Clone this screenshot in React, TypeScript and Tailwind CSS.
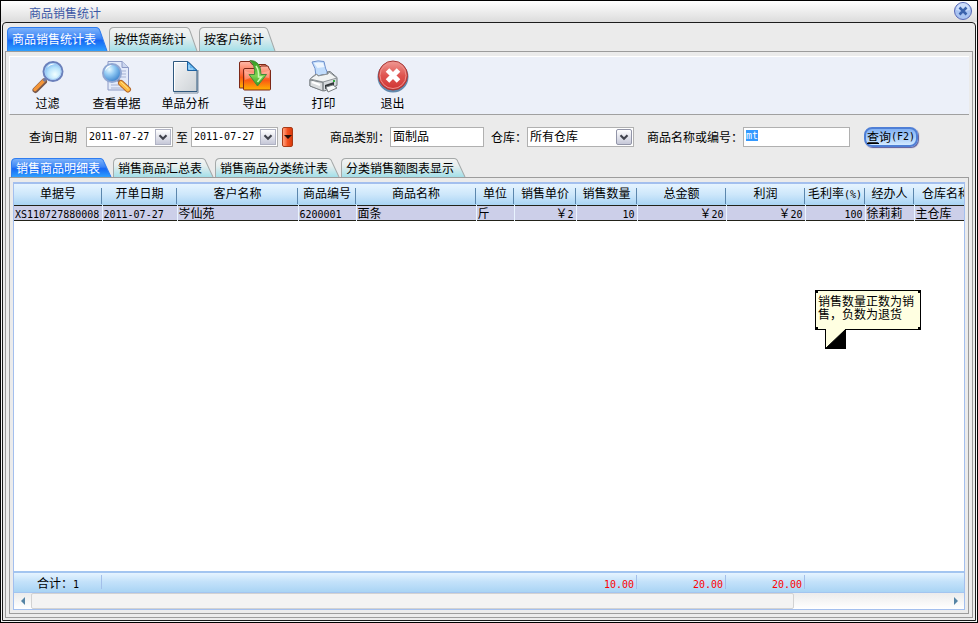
import { useEffect, useRef, type ReactNode } from "react";

const reportTabs = ["商品销售统计表", "按供货商统计", "按客户统计"];
const detailTabs = ["销售商品明细表", "销售商品汇总表", "销售商品分类统计表", "分类销售额图表显示"];

const columns = [
  { title: "单据号", width: "w-[88px]" },
  { title: "开单日期", width: "w-[75px]" },
  { title: "客户名称", width: "w-[121px]" },
  { title: "商品编号", width: "w-[58px]" },
  { title: "商品名称", width: "w-[120px]" },
  { title: "单位", width: "w-[38px]" },
  { title: "销售单价", width: "w-[62px]" },
  { title: "销售数量", width: "w-[61px]" },
  { title: "总金额", width: "w-[89px]" },
  { title: "利润", width: "w-[79px]" },
  { title: "毛利率", unit: "(%)", width: "w-[60px]" },
  { title: "经办人", width: "w-[49px]" },
  { title: "仓库名称", width: "w-[64px]" },
];

function Num({ children }: { children: ReactNode }) {
  return <span className="font-['DejaVu_Sans_Mono',monospace] text-[10px] leading-none">{children}</span>;
}

function Tab({ label, active, tall }: { label: string; active: boolean; tall?: boolean }) {
  const w = label.length * 12 + 17;
  const h = tall ? 24 : 19;
  const shape = `M.5 ${h}V5Q.5 .5 5 .5H${w - 12}Q${w - 9} .5 ${w - 8} 4L${w - 1} ${h}`;
  const fill = active ? "url(#tab-on)" : "url(#tab-off)";
  return (
    <button
      role="tab"
      aria-selected={active}
      className={`relative pl-[5px] pr-3 ${tall ? "h-6" : "h-[19px]"} ${active ? "text-white" : "text-black"}`}
    >
      <svg className="absolute inset-0 h-full w-full" viewBox={`0 0 ${w} ${h}`} preserveAspectRatio="none">
        <path d={shape} fill={fill} stroke={active ? "#2f7df0" : "#a5a9a9"} />
      </svg>
      <span className="relative block whitespace-nowrap leading-4">{label}</span>
    </button>
  );
}

// gradients shared by tabs and toolbar icons
function Gradients() {
  return (
    <svg className="absolute h-0 w-0" aria-hidden="true">
      <defs>
        <linearGradient id="tab-on" x1="0" y1="0" x2="0" y2="1">
          <stop offset="0" stopColor="#7eb4fb" />
          <stop offset=".45" stopColor="#3d85f5" />
          <stop offset=".55" stopColor="#1667f4" />
          <stop offset="1" stopColor="#2fa0ff" />
        </linearGradient>
        <linearGradient id="tab-off" x1="0" y1="0" x2="0" y2="1">
          <stop offset="0" stopColor="#f4f4f3" />
          <stop offset=".4" stopColor="#e6eeee" />
          <stop offset="1" stopColor="#a3dfe8" />
        </linearGradient>
        <radialGradient id="lens" cx=".6" cy=".65" r=".7">
          <stop offset="0" stopColor="#f2ffff" />
          <stop offset=".5" stopColor="#b9e4fc" />
          <stop offset="1" stopColor="#6eaeed" />
        </radialGradient>
        <radialGradient id="lens-dark" cx=".35" cy=".3" r=".8">
          <stop offset="0" stopColor="#e9faff" />
          <stop offset=".4" stopColor="#8fc8f3" />
          <stop offset="1" stopColor="#2b74c4" />
        </radialGradient>
        <linearGradient id="paper" x1="0" y1="0" x2="1" y2="1">
          <stop offset="0" stopColor="#f4f5f7" />
          <stop offset="1" stopColor="#cdd2d6" />
        </linearGradient>
        <linearGradient id="folder" x1="0" y1="0" x2="0" y2="1">
          <stop offset="0" stopColor="#ffb9a8" />
          <stop offset=".45" stopColor="#fb6e48" />
          <stop offset=".6" stopColor="#f95a14" />
          <stop offset="1" stopColor="#ffb400" />
        </linearGradient>
        <linearGradient id="arrow" x1="0" y1="0" x2="0" y2="1">
          <stop offset="0" stopColor="#2f9a1d" />
          <stop offset=".6" stopColor="#7fd452" />
          <stop offset="1" stopColor="#2f9a1d" />
        </linearGradient>
        <linearGradient id="exit" x1="0" y1="0" x2="0" y2="1">
          <stop offset="0" stopColor="#f09a94" />
          <stop offset=".5" stopColor="#df5450" />
          <stop offset="1" stopColor="#cf3331" />
        </linearGradient>
      </defs>
    </svg>
  );
}

function FilterIcon() {
  return (
    <svg className="h-9 w-9" viewBox="0 0 36 36">
      <path d="M5.500 31l8.500-8.500" stroke="#78584c" strokeWidth="6" strokeLinecap="round" />
      <path d="M5 30.500l9-9" stroke="#f49538" strokeWidth="3.500" strokeLinecap="round" />
      <path d="M13.500 22l3-3" stroke="#777b9a" strokeWidth="3" />
      <circle cx="23" cy="12.500" r="9.500" fill="url(#lens)" stroke="#6b80bb" strokeWidth="2" />
      <circle cx="23" cy="12.500" r="8" fill="none" stroke="#a7cdf6" />
      <path d="M17 9q2-5 8-4-6 1-8 4" fill="#fff" />
    </svg>
  );
}

function ViewIcon() {
  return (
    <svg className="h-9 w-9" viewBox="0 0 36 36">
      <path d="M9 2.500h14l6.500 6V31H9z" fill="#e3eafa" stroke="#8c99c4" />
      <path d="M23 2.500v6h6.500" fill="#cbd6ee" stroke="#8c99c4" />
      <path d="M20 12h7M22 15h5M22 18h5M12 26h8M12 29h11" stroke="#a5b1d3" />
      <circle cx="13" cy="14" r="9" fill="url(#lens-dark)" stroke="#8fa6d2" strokeWidth="2" />
      <path d="M6 12q1-6 7-6-4 2-7 6" fill="#fff" />
      <path d="M19 21l3 3" stroke="#7183ab" strokeWidth="3" />
      <path d="M22 24l7 6.500" stroke="#b5672a" strokeWidth="6" strokeLinecap="round" />
      <path d="M22 24l7 6.500" stroke="#ffbc43" strokeWidth="4" strokeLinecap="round" />
      <path d="M22 23l7 6.500" stroke="#ffe38d" strokeLinecap="round" />
    </svg>
  );
}

function DocumentIcon() {
  return (
    <svg className="h-9 w-9" viewBox="0 0 36 36">
      <path d="M6 34h24V11" fill="none" stroke="#7d8c9c" />
      <path d="M5.500 2.500H20l9 9V32.500H5.500z" fill="url(#paper)" stroke="#2f587e" />
      <path d="M6.500 31.500V3.500H19" fill="none" stroke="#fff" />
      <path d="M19.500 2.500l9.500 9h-9.500z" fill="#63b4ee" stroke="#1d62a2" />
      <path d="M21 6v4h4" fill="none" stroke="#c0e6ff" />
    </svg>
  );
}

function ExportIcon() {
  return (
    <svg className="h-9 w-9" viewBox="0 0 36 36">
      <path d="M2.500 29V4q0-1.500 1.500-1.500h9l2 3h13q1.500 0 1.500 1.500v22z" fill="url(#folder)" stroke="#7d2817" />
      <path d="M6.500 30V11q0-1.500 1.500-1.500h14l2-2.500h7l1.500 3.500q1 0 1 1.500v18q0 1-1 1H7.500q-1 0-1-1z" fill="url(#folder)" stroke="#7d2817" />
      <path d="M8 12q9 4 24 0v7q-13-4-24 2z" fill="#fff" opacity=".25" />
      <path d="M13 1.500q11 0 11 14h5.500L20.500 27l-8.500-11.500h5.500q1-9-4.500-14z" fill="url(#arrow)" stroke="#47873b" />
      <path d="M19 7q3 4 2.500 11h3l-4 5" fill="none" stroke="#cdf9b3" strokeWidth="1.500" />
    </svg>
  );
}

function PrintIcon() {
  return (
    <svg className="h-9 w-9" viewBox="0 0 36 36">
      <path d="M6 3q6-2 12-.500 1 7 4 12.500l-12 2Q10 9 6 3z" fill="#c2ddfc" stroke="#6e90cc" />
      <path d="M8 4q5-1 9 0l1.500 4-7 1z" fill="#fff" opacity=".7" />
      <path d="M4 20l6-5 1 2 11-2-1-2 3-.500 7 6v8L18 32 4 27z" fill="#d5d9dc" stroke="#6c7277" />
      <path d="M4 20l7-5 1 2 10-2 1-2 8 6-14 4z" fill="#f1f3f3" stroke="#8e9498" />
      <path d="M17 23v8.500M4 21v6l13 5v-8.500z" fill="#d9dcde" stroke="#7e8488" />
      <path d="M19 26l9-3v3l-9 4z" fill="#32373a" />
      <path d="M20 28l7-2 4 3-9 4z" fill="#f8fafb" stroke="#777d81" />
      <path d="M28 21v2" stroke="#34ae43" strokeWidth="2" />
      <path d="M6 23l8 3" stroke="#fff" strokeWidth="2" />
    </svg>
  );
}

function ExitIcon() {
  return (
    <svg className="h-9 w-9" viewBox="0 0 36 36">
      <circle cx="18" cy="18" r="15.500" fill="#6289ad" />
      <circle cx="18" cy="16.500" r="14.500" fill="url(#exit)" stroke="#a73735" />
      <circle cx="18" cy="16.500" r="13" fill="none" stroke="#ee908b" />
      <path d="M12.500 11l11 11M23.500 11L12.500 22" stroke="#fff" strokeWidth="5" />
    </svg>
  );
}

const tools = [
  { label: "过滤", Icon: FilterIcon },
  { label: "查看单据", Icon: ViewIcon },
  { label: "单品分析", Icon: DocumentIcon },
  { label: "导出", Icon: ExportIcon },
  { label: "打印", Icon: PrintIcon },
  { label: "退出", Icon: ExitIcon },
];

function Chevron() {
  return (
    <svg className="h-4 w-4" viewBox="0 0 16 16">
      <path d="M4 6l4 4 4-4" fill="none" stroke="#40434c" strokeWidth="2.500" />
    </svg>
  );
}

function DateBox({ label, value }: { label: string; value: string }) {
  return (
    <div className="flex h-5 w-[87px] items-center border border-[#b0b0b0] bg-white pr-px">
      <input
        aria-label={label}
        defaultValue={value}
        className="w-0 flex-1 bg-transparent pl-0.5 font-['DejaVu_Sans_Mono',monospace] text-[10px] outline-none"
      />
      <button
        aria-label={`选择${label}`}
        className="flex h-4 w-4 items-center justify-center border border-[#b0b3c4] bg-linear-to-b from-white to-[#c6c8d8]"
      >
        <Chevron />
      </button>
    </div>
  );
}

function ColGroup() {
  return (
    <colgroup>
      {columns.map((c) => <col key={c.title} className={c.width} />)}
    </colgroup>
  );
}

function SalesTable() {
  const cell = "h-[14px] overflow-hidden border-r border-[#e8f3ff] p-0 pl-px leading-[14px]";
  return (
    <table className="w-[964px] table-fixed border-collapse whitespace-nowrap">
      <ColGroup />
      <thead>
        <tr className="h-[21px] bg-linear-to-b from-[#e6f4ff] from-0% via-[#cde7fb] via-50% to-[#a9d4f4] to-100%">
          {columns.map((c) => (
            <th key={c.title} className="relative overflow-hidden p-0 pb-0.5 font-normal leading-[18px]">
              {c.title}
              {c.unit && <Num>{c.unit}</Num>}
              <span className="absolute right-0 top-1 h-4 w-px bg-[#5b86ad]" />
            </th>
          ))}
        </tr>
      </thead>
      <tbody>
        <tr className="border-y border-[#222219] bg-[#cccfe9]">
          <td className={cell}><Num>XS110727880008</Num></td>
          <td className={cell}><Num>2011-07-27</Num></td>
          <td className={cell}>岑仙苑</td>
          <td className={cell}><Num>6200001</Num></td>
          <td className={cell}>面条</td>
          <td className={cell}>斤</td>
          <td className={`${cell} pr-0.5 text-right`}>￥<Num>2</Num></td>
          <td className={`${cell} pr-0.5 text-right`}><Num>10</Num></td>
          <td className={`${cell} pr-0.5 text-right`}>￥<Num>20</Num></td>
          <td className={`${cell} pr-0.5 text-right`}>￥<Num>20</Num></td>
          <td className={`${cell} pr-0.5 text-right`}><Num>100</Num></td>
          <td className={cell}>徐莉莉</td>
          <td className={cell}>主仓库</td>
        </tr>
      </tbody>
    </table>
  );
}

function Totals() {
  const totals: Record<string, string> = { 销售数量: "10.00", 总金额: "20.00", 利润: "20.00" };
  return (
    <div className="overflow-hidden border-b border-t-2 border-[#a3c5f0] bg-linear-to-b from-[#e6f4ff] from-0% via-[#c4e2fa] via-45% to-[#a9d4f4] to-100%">
      <table className="w-[964px] table-fixed border-collapse">
        <ColGroup />
        <tbody>
          <tr className="h-[19px]">
            {columns.map((c, i) => (
              <td key={c.title} className="relative p-0 pr-[3px] text-right leading-[18px] text-[#ff0000]">
                {i === 0 && <span className="block pr-5 text-black">合计：<Num>1</Num></span>}
                {totals[c.title] && <Num>{totals[c.title]}</Num>}
                {(i === 0 || totals[c.title]) && <span className="absolute right-0 top-0.5 h-3.5 w-px bg-[#a3bfe9]" />}
              </td>
            ))}
          </tr>
        </tbody>
      </table>
    </div>
  );
}

function ScrollBar() {
  return (
    <div className="flex h-4 bg-linear-to-b from-[#ececec] to-white">
      <button aria-label="向左滚动" className="flex w-[17px] items-center justify-center">
        <svg className="h-2 w-2" viewBox="0 0 8 8"><path d="M6 0v8L2 4z" fill="#5584a5" /></svg>
      </button>
      <div className="flex-1">
        <div className="h-4 w-5/6 rounded-xs border border-[#d2d2d2] bg-[#f3f3f3]" />
      </div>
      <button aria-label="向右滚动" className="flex w-[17px] items-center justify-center">
        <svg className="h-2 w-2" viewBox="0 0 8 8"><path d="M2 0v8l4-4z" fill="#5584a5" /></svg>
      </button>
    </div>
  );
}

function Hint() {
  return (
    <div className="absolute right-[43px] top-[106px] w-[106px]">
      <p className="relative h-10 border border-black bg-[#ffffe1] px-0.5 pt-[3px] leading-[13px]">
        销售数量正数为销售，负数为退货
        <span className="absolute -left-px -top-px size-[3px] bg-black" />
        <span className="absolute -right-px -top-px size-[3px] bg-black" />
        <span className="absolute -bottom-px -left-px size-[3px] bg-black" />
        <span className="absolute -bottom-px -right-px size-[3px] bg-black" />
      </p>
      <svg className="relative -mt-px ml-2.5 h-5 w-[21px]" viewBox="0 0 21 20">
        <path d="M0 0h21L0 20z" fill="#ffffe1" />
        <path d="M.500 0v20M21 0L0 20h21z" stroke="#000" fill="#000" />
      </svg>
    </div>
  );
}

export default function App() {
  const keyword = useRef<HTMLInputElement>(null);

  useEffect(() => {
    keyword.current?.focus();
    keyword.current?.select();
  }, []);

  return (
    <div className="flex min-h-screen flex-col border border-black bg-[#f4f4f4] font-['Noto_Sans_CJK_SC',sans-serif] text-[12px] leading-4 text-black">
      <Gradients />
      <header className="flex h-[21px] items-center justify-between bg-linear-to-b from-white to-[#dcdcdc] pl-7 pr-1">
        <h1 className="pt-0.5 text-[#3c58a6]">商品销售统计</h1>
        <button aria-label="关闭">
          <svg className="h-5 w-5" viewBox="0 0 20 20">
            <circle cx="10" cy="9" r="8.500" fill="#a9c3f1" stroke="#5767b5" />
            <path d="M3 8a7 7 0 0 1 14 0q-7 2-14 0" fill="#dce8ff" opacity=".7" />
            <path d="M6.500 5.500l7 7M13.500 5.500l-7 7" stroke="#3b62ac" strokeWidth="2.500" />
          </svg>
        </button>
      </header>

      <main className="mx-px mb-px flex flex-1 flex-col rounded-t border border-[#1c1c1c] bg-[#ebebeb] px-0.5 pb-0.5 pt-1">
        <div role="tablist" className="flex gap-px pl-0.5">
          {reportTabs.map((label, i) => <Tab key={label} label={label} active={i === 0} tall />)}
        </div>

        <section className="flex flex-1 flex-col border border-[#9c9c9c] px-[3px] pb-[3px] pt-1">
          <nav className="flex h-[59px] border-b border-l border-t border-b-[#a0a0a0] border-l-white border-t-white bg-[#ecf0f9] pl-[3px]">
            {tools.map(({ label, Icon }) => (
              <button key={label} className="flex w-[69px] flex-col items-center pt-0.5">
                <Icon />
                <span>{label}</span>
              </button>
            ))}
          </nav>

          <form className="flex h-[43px] items-center pl-5" onSubmit={(e) => e.preventDefault()}>
            <span className="mr-2 w-[49px]">查询日期</span>
            <DateBox label="开始日期" value="2011-07-27" />
            <span className="mx-[3px]">至</span>
            <DateBox label="结束日期" value="2011-07-27" />
            <button
              type="button"
              aria-label="日期范围"
              className="ml-1 flex h-5 w-[11px] items-center justify-center rounded-xs border border-[#a83a16] bg-linear-to-r from-[#ffa07a] via-[#f4511e] to-[#d93a0b]"
            >
              <svg className="h-1.5 w-2" viewBox="0 0 8 6"><path d="M0 1h8L4 5z" fill="#261009" /></svg>
            </button>
            <label htmlFor="category" className="ml-[37px]">商品类别：</label>
            <input id="category" defaultValue="面制品" className="h-5 w-[94px] border border-[#b0b0b0] bg-white px-0.5 pb-0.5 outline-none" />
            <label htmlFor="warehouse" className="ml-[7px]">仓库：</label>
            <div className="relative h-5">
              <select id="warehouse" className="h-5 w-[107px] appearance-none border border-[#b0b0b0] bg-white px-0.5 pb-0.5 leading-4 outline-none">
                <option>所有仓库</option>
              </select>
              <span className="pointer-events-none absolute right-0.5 top-0.5 flex h-4 w-4 items-center justify-center rounded-xs border border-[#9295a8] bg-linear-to-b from-white to-[#c6c8d8]">
                <Chevron />
              </span>
            </div>
            <label htmlFor="keyword" className="ml-[13px]">商品名称或编号：</label>
            <input
              id="keyword"
              ref={keyword}
              defaultValue="mt"
              className="h-5 w-[107px] border border-[#b0b0b0] bg-white px-0.5 pb-0.5 font-['DejaVu_Sans_Mono',monospace] text-[10px] outline-none selection:bg-[#3399ff] selection:text-white"
            />
            <button className="ml-3.5 flex h-5 w-[54px] items-center justify-center whitespace-nowrap rounded-lg border-2 border-[#4f7fd6] bg-linear-to-b from-[#84b2f3] via-[#a5cbf9] to-[#d3eaff] shadow-[1px_1px_1px_#5a5a9c]">
              <u>查</u>询<Num>(F2)</Num>
            </button>
          </form>

          <div role="tablist" className="flex gap-px pl-0.5">
            {detailTabs.map((label, i) => <Tab key={label} label={label} active={i === 0} />)}
          </div>

          <div className="flex flex-1 flex-col border border-[#9c9c9c] p-[3px] pt-1">
            <div className="relative flex flex-1 flex-col overflow-hidden border border-t-2 border-[#a3bfee] bg-white">
              <div className="overflow-hidden">
                <SalesTable />
              </div>
              <div className="flex-1" />
              <Totals />
              <ScrollBar />
              <Hint />
            </div>
          </div>
        </section>
      </main>
    </div>
  );
}
